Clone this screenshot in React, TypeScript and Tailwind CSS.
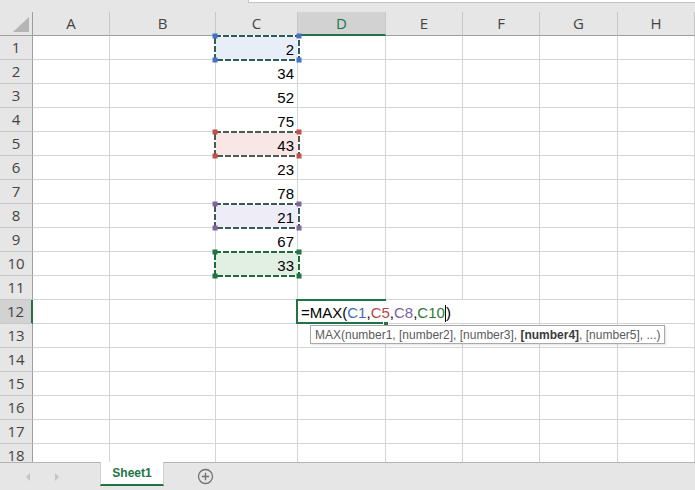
import React from "react";

const columns = ["A", "B", "C", "D", "E", "F", "G", "H"];

const values: Record<number, string> = {
  1: "2",
  2: "34",
  3: "52",
  4: "75",
  5: "43",
  6: "23",
  7: "78",
  8: "21",
  9: "67",
  10: "33",
};

interface MarkProps {
  fill: string;
  dash: string;
  corner: string;
}

// reference boxes around C1, C5, C8, C10
const marks: Record<number, MarkProps> = {
  1: { fill: "#e7eef8", dash: "#2f5c57", corner: "#4472c4" },
  5: { fill: "#f9e6e6", dash: "#4a5a4c", corner: "#c0504d" },
  8: { fill: "#eeecf6", dash: "#3c5a56", corner: "#8064a2" },
  10: { fill: "#e2f0e4", dash: "#1e6b3a", corner: "#217346" },
};

const Marquee: React.FC<MarkProps> = ({ fill, dash, corner }) => {
  return (
    <div className="absolute -left-[2px] -top-[1px] w-[86px] h-[26px] z-10 pointer-events-none">
      <svg width="86" height="26" className="overflow-visible">
        <rect x="1" y="1" width="84" height="24" fill={fill} />
        <rect x="1" y="1" width="84" height="24" fill="none" stroke="#ffffff" strokeWidth="2" />
        <rect x="1" y="1" width="84" height="24" fill="none" stroke={dash} strokeWidth="2" strokeDasharray="6 2" />
        <rect x="-1.5" y="-1.5" width="5" height="5" fill={corner} />
        <rect x="82.5" y="-1.5" width="5" height="5" fill={corner} />
        <rect x="-1.5" y="22.5" width="5" height="5" fill={corner} />
        <rect x="82.5" y="22.5" width="5" height="5" fill={corner} />
      </svg>
    </div>
  );
};

const FormulaCell: React.FC = () => {
  return (
    <div className="relative h-[24px] border-b border-[#d4d4d4]">
      <div className="absolute -left-[2px] -top-[1px] w-[90px] h-[25px] border-l-2 border-t-2 border-b-2 border-[#217346] z-10"></div>
      <div className="absolute left-[85px] top-[21px] w-[6px] h-[6px] bg-[#217346] border border-white z-20"></div>
      <div className="absolute left-[3px] bottom-[2px] z-20 whitespace-nowrap text-[15px] leading-[17px] text-black">
        =MAX(<span className="text-[#3e6db5]">C1</span>,<span className="text-[#b4474c]">C5</span>,
        <span className="text-[#7d62a6]">C8</span>,<span className="text-[#2a7a3c]">C10</span>
        <span className="inline-block w-[1px] h-[17px] bg-black align-bottom -mb-[1px]"></span>)
      </div>
      <div className="absolute left-[12px] top-[25px] z-30 whitespace-nowrap bg-white border border-[#a9a9a9] px-[4px] h-[19px] flex items-center text-[12px] text-[#5b5b5b] shadow-[1px_1px_2px_rgba(0,0,0,0.12)]">
        <span className="whitespace-pre">MAX(number1, [number2], [number3], </span>
        <span className="font-bold text-[#3a3a3a]">[number4]</span>
        <span className="whitespace-pre">, [number5], ...)</span>
      </div>
    </div>
  );
};

export default function App() {
  const rows = Array.from({ length: 18 }, (_, i) => i + 1);

  return (
    <div className="w-[695px] h-[490px] overflow-hidden bg-white flex flex-col font-['Liberation_Sans',Arial,sans-serif] select-none">
      {/* formula bar edge */}
      <div className="h-[12px] bg-[#e6e6e6] flex shrink-0">
        <div className="ml-[248px] flex-1 h-[3px] bg-white border-b border-l border-[#c6c6c6]"></div>
      </div>

      <div className="h-[450px] overflow-hidden shrink-0">
        <div className="grid grid-cols-[33px_77px_106px_82px_88px_77px_77px_78px_77px]">
          {/* column header */}
          <div className="relative h-[24px] bg-[#e6e6e6] border-r border-b border-[#9e9e9e]">
            <svg className="absolute left-[13px] top-[5px]" width="16" height="15">
              <polygon points="16,0 16,15 0,15" fill="#b5b5b5" />
            </svg>
          </div>
          {columns.map((c) => (
            <div
              key={c}
              className={
                c === "D"
                  ? "h-[24px] bg-[#d2d2d2] border-r border-[#c8c8c8] border-b-2 border-b-[#217346] flex items-center justify-center text-[15px] text-[#217346] font-['Open_Sans',sans-serif]"
                  : "h-[24px] bg-[#e6e6e6] border-r border-[#c8c8c8] border-b border-b-[#9e9e9e] flex items-center justify-center text-[15px] text-[#444] font-['Open_Sans',sans-serif]"
              }
            >
              {c}
            </div>
          ))}

          {rows.map((r) => (
            <React.Fragment key={r}>
              <div
                className={
                  r === 12
                    ? "h-[24px] bg-[#d2d2d2] border-r-2 border-r-[#217346] border-b border-[#c8c8c8] flex items-center justify-center text-[15px] text-[#444] font-['Open_Sans',sans-serif]"
                    : "h-[24px] bg-[#e6e6e6] border-r border-r-[#9e9e9e] border-b border-[#c8c8c8] flex items-center justify-center text-[15px] text-[#444] font-['Open_Sans',sans-serif]"
                }
              >
                {r}
              </div>
              {columns.map((c) => {
                if (c === "D" && r === 12) return <FormulaCell key={c} />;
                if (c === "E" && r === 12)
                  return <div key={c} className="h-[24px] border-b border-[#d4d4d4]"></div>;
                if (c === "C" && values[r]) {
                  const m = marks[r];
                  return (
                    <div
                      key={c}
                      className="relative h-[24px] border-r border-b border-[#d4d4d4] flex items-end justify-end pr-[3px] pb-[1px]"
                    >
                      {m && <Marquee {...m} />}
                      <span className="relative z-20 text-[15px] leading-[17px] text-black">{values[r]}</span>
                    </div>
                  );
                }
                return <div key={c} className="h-[24px] border-r border-b border-[#d4d4d4]"></div>;
              })}
            </React.Fragment>
          ))}
        </div>
      </div>

      {/* sheet tabs */}
      <div className="h-[28px] bg-[#e6e6e6] border-t border-[#b4b4b4] flex items-start shrink-0">
        <div className="w-[100px] h-[27px] flex items-center">
          <svg className="ml-[25px]" width="6" height="8">
            <polygon points="5,0 5,8 1,4" fill="#c4c4c4" />
          </svg>
          <svg className="ml-[23px]" width="6" height="8">
            <polygon points="1,0 1,8 5,4" fill="#c4c4c4" />
          </svg>
        </div>
        <div className="w-[64px] h-[24px] -mt-[1px] bg-white border-l border-r border-[#d0d0d0] border-b-2 border-b-[#217346] flex items-center justify-center text-[12px] font-bold text-[#217346]">
          Sheet1
        </div>
        <div className="ml-[33px] h-[27px] flex items-center">
          <svg width="17" height="17" viewBox="0 0 17 17">
            <circle cx="8.5" cy="8.5" r="7" fill="none" stroke="#707070" strokeWidth="1.3" />
            <path d="M8.5 4.8v7.4M4.8 8.5h7.4" stroke="#707070" strokeWidth="1.4" />
          </svg>
        </div>
      </div>
    </div>
  );
}
